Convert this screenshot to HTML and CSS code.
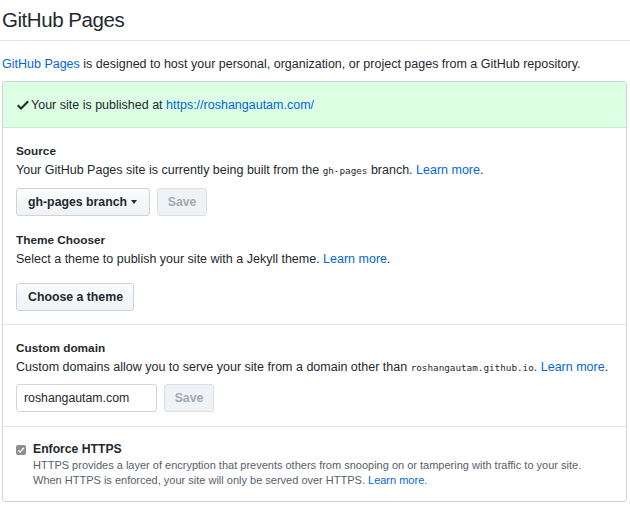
FILE: index.html
```html
<!DOCTYPE html>
<html>
<head>
<meta charset="utf-8">
<link rel="stylesheet" href="styles.css">
</head>
<body>
<div class="page">
  <h2 class="title">GitHub Pages</h2>
  <p class="intro"><a href="#">GitHub Pages</a> is designed to host your personal, organization, or project pages from a GitHub repository.</p>
  <div class="box">
    <div class="flash">
      <svg class="check" width="12" height="16" viewBox="0 0 12 16"><path d="M12 5l-8 8-4-4 1.5-1.5L4 10l6.5-6.5L12 5z" fill="#24292e"/></svg>
      <span>Your site is published at <a href="#">https://roshangautam.com/</a></span>
    </div>
    <div class="section source">
      <h4 class="label">Source</h4>
      <p class="desc">Your GitHub Pages site is currently being built from the <code>gh-pages</code> branch. <a href="#">Learn more</a>.</p>
      <div class="row">
        <button class="btn btn-select">gh-pages branch <span class="caret"></span></button>
        <button class="btn disabled">Save</button>
      </div>
      <h4 class="label theme-label">Theme Chooser</h4>
      <p class="desc">Select a theme to publish your site with a Jekyll theme. <a href="#">Learn more</a>.</p>
      <div class="row row-wide">
        <button class="btn">Choose a theme</button>
      </div>
    </div>
    <div class="section">
      <h4 class="label">Custom domain</h4>
      <p class="desc">Custom domains allow you to serve your site from a domain other than <code>roshangautam.github.io</code>. <a href="#">Learn more</a>.</p>
      <div class="row row-tight">
        <input class="field" type="text" value="roshangautam.com">
        <button class="btn disabled">Save</button>
      </div>
    </div>
    <div class="section https">
      <div class="check-row">
        <span class="checkbox"><svg width="8" height="8" viewBox="0 0 8 8"><path d="M1.2 4.2l1.9 1.9 3.8-4.3" stroke="#fff" stroke-width="1.4" fill="none"/></svg></span>
        <div>
          <div class="https-label">Enforce HTTPS</div>
          <p class="note">HTTPS provides a layer of encryption that prevents others from snooping on or tampering with traffic to your site.<br>When HTTPS is enforced, your site will only be served over HTTPS. <a href="#">Learn more</a>.</p>
        </div>
      </div>
    </div>
  </div>
</div>
</body>
</html>
```
FILE: styles.css
```css
html, body {
  margin: 0;
  padding: 0;
  background: #fff;
}
body {
  font-family: "Liberation Sans", Arial, sans-serif;
  font-size: 12.5px;
  color: #24292e;
}
a {
  color: #0366d6;
  text-decoration: none;
}
.page {
  width: 630px;
}
.title {
  margin: 0;
  padding: 7px 0 8px 2px;
  font-size: 20.5px;
  letter-spacing: -0.45px;
  font-weight: 400;
  line-height: 25px;
  border-bottom: 1px solid #e1e4e8;
}
.intro {
  margin: 14px 0 8px 2px;
  line-height: 18px;
}
.box {
  margin-left: 2px;
  width: 623px;
  border: 1px solid #d1d5da;
  border-radius: 3px;
}
.flash {
  height: 46px;
  box-sizing: border-box;
  padding: 0 14px;
  display: flex;
  align-items: center;
  gap: 2px;
  background: #dcffe4;
  border-bottom: 1px solid #cfe7d5;
  border-radius: 3px 3px 0 0;
}
.check {
  display: block;
}
.section {
  padding: 14px 13px 14px;
  border-bottom: 1px solid #e1e4e8;
}
.section.source {
  padding-bottom: 13px;
}
.section:last-child {
  border-bottom: 0;
}
.label {
  margin: 0;
  font-size: 11.8px;
  font-weight: 700;
  line-height: 19px;
}
.theme-label {
  margin-top: 15px;
}
.desc {
  margin: 0;
  line-height: 19px;
}
code {
  font-family: "DejaVu Sans Mono", monospace;
  font-size: 9.3px;
}
.row {
  display: flex;
  gap: 7px;
  margin-top: 8px;
}
.row-wide {
  margin-top: 14px;
}
.row-tight {
  margin-top: 7px;
}
.btn {
  font-family: inherit;
  font-size: 12.3px;
  font-weight: 700;
  color: #24292e;
  height: 28px;
  padding: 0 10px 0 11px;
  background: linear-gradient(#fafbfc, #eff3f6);
  border: 1px solid #cfd2d6;
  border-radius: 3px;
  display: flex;
  align-items: center;
  gap: 4px;
}
.btn-select {
  padding-right: 12px;
}
.btn.disabled {
  color: #a3aab1;
  background: #eff3f6;
  border-color: #dcdfe2;
  padding: 0 11px;
  width: 50px;
  justify-content: center;
}
.caret {
  width: 0;
  height: 0;
  border-left: 3.5px solid transparent;
  border-right: 3.5px solid transparent;
  border-top: 4px solid #24292e;
}
.field {
  font-family: inherit;
  font-size: 12.3px;
  color: #24292e;
  width: 141px;
  height: 28px;
  box-sizing: border-box;
  padding: 0 7px;
  border: 1px solid #d1d5da;
  border-radius: 3px;
  outline: none;
}
.https {
  padding: 14px 13px 13px;
}
.check-row {
  display: flex;
  gap: 7px;
}
.checkbox {
  width: 10px;
  height: 10px;
  margin-top: 4px;
  background: #8a8f95;
  border-radius: 2px;
  display: flex;
  align-items: center;
  justify-content: center;
  flex: none;
}
.checkbox svg {
  display: block;
}
.https-label {
  font-size: 12.2px;
  font-weight: 700;
  line-height: 17px;
}
.note {
  margin: 0;
  font-size: 11px;
  line-height: 15px;
  color: #586069;
}
```
